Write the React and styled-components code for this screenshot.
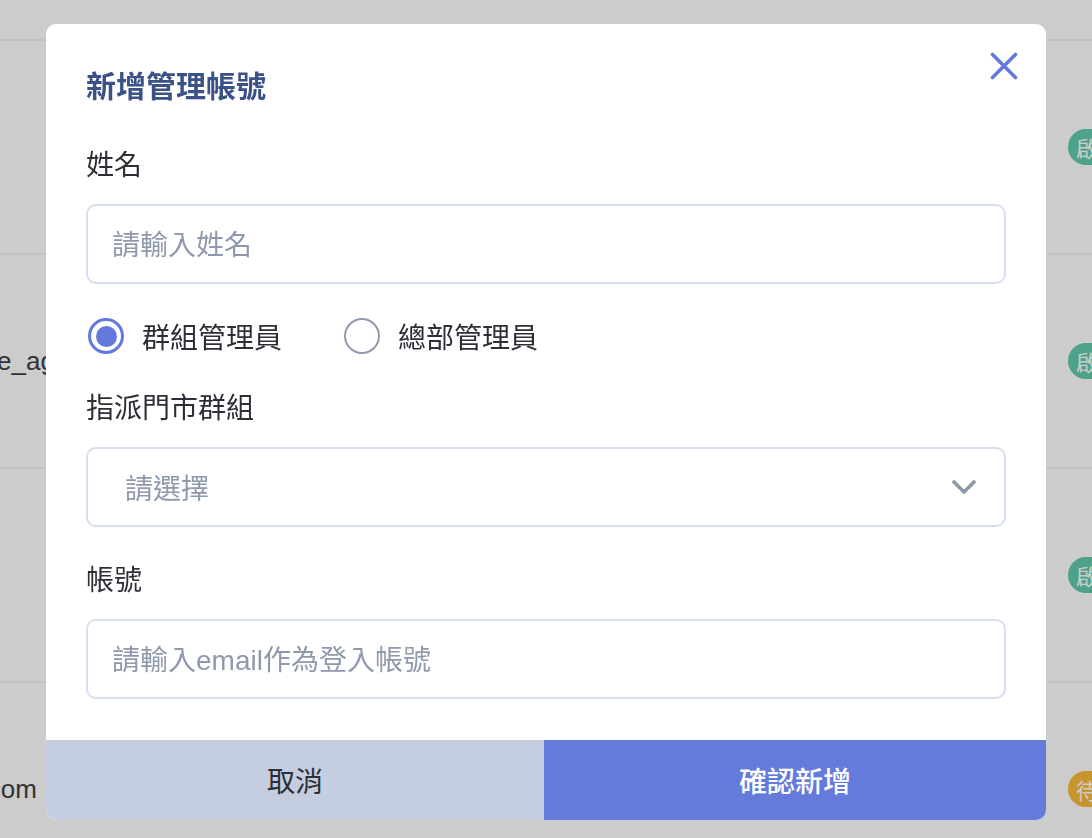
import React, { useState } from 'react';
import styled, { createGlobalStyle } from 'styled-components';

const GlobalStyle = createGlobalStyle`
  html, body {
    margin: 0;
    padding: 0;
    background: #ffffff;
    overflow: hidden;
  }
  * {
    box-sizing: border-box;
  }
`;

const Page = styled.div`
  width: 1092px;
  height: 838px;
  overflow: hidden;
  font-family: "Liberation Sans", "Noto Sans CJK TC", sans-serif;
  color: #404040;
`;

const TableHead = styled.div`
  height: 41px;
  border-bottom: 2px solid #f2f2f6;
`;

const Row = styled.div`
  display: grid;
  grid-template-columns: 1068px 120px;
  align-items: center;
  height: 214px;
  border-bottom: 2px solid #f2f2f6;
`;

const NameCell = styled.div`
  display: flex;
  justify-content: ${p => (p.$alignEnd ? 'flex-end' : 'flex-start')};
  width: ${p => (p.$alignEnd ? '37px' : 'auto')};
  margin-left: ${p => p.$offset || 0}px;
  white-space: nowrap;
  font-size: 26px;
`;

const Badge = styled.span`
  display: inline-flex;
  align-items: center;
  height: 36px;
  padding: 0 18px 0 8px;
  border-radius: 18px;
  background: ${p => p.$color};
  color: #ffffff;
  font-family: "Noto Sans CJK TC", sans-serif;
  font-size: 22px;
  width: max-content;
`;

const Backdrop = styled.div`
  position: fixed;
  inset: 0;
  background: rgba(0, 0, 0, 0.2);
  display: flex;
  justify-content: center;
  align-items: flex-start;
  padding-top: 24px;
`;

const Modal = styled.div`
  position: relative;
  width: 1000px;
  height: 796px;
  background: #ffffff;
  border-radius: 10px;
  overflow: hidden;
  display: flex;
  flex-direction: column;
  font-family: "Noto Sans CJK TC", "Noto Sans", sans-serif;
`;

const CloseButton = styled.button`
  position: absolute;
  top: 28px;
  right: 28px;
  width: 28px;
  height: 28px;
  padding: 0;
  border: none;
  background: none;
  cursor: pointer;
  color: #6479dc;
  display: flex;
`;

const Body = styled.div`
  flex: 1;
  padding: 39px 40px 0;
  display: flex;
  flex-direction: column;
`;

const Title = styled.h2`
  margin: 0 0 38px;
  font-size: 30px;
  line-height: 42px;
  font-weight: 700;
  color: #3b5289;
`;

const Fields = styled.div`
  display: flex;
  flex-direction: column;
  gap: 31px;
`;

const Field = styled.div`
  display: flex;
  flex-direction: column;
  gap: 21px;
`;

const Label = styled.label`
  font-size: 28px;
  line-height: 40px;
  color: #2c2f36;
`;

const Input = styled.input`
  width: 100%;
  height: 80px;
  padding: 4px 24px 0;
  border: 2px solid #d6deef;
  border-radius: 10px;
  font-family: "Liberation Sans", "Noto Sans CJK TC", sans-serif;
  font-size: 28px;
  color: #2c2f36;
  outline: none;
  &::placeholder {
    color: #8f99ad;
  }
`;

const SelectBox = styled.div`
  display: flex;
  align-items: center;
  justify-content: space-between;
  height: 80px;
  padding: 0 28px 0 37px;
  border: 2px solid #d6deef;
  border-radius: 10px;
  font-size: 28px;
  color: #8f99ad;
  cursor: pointer;
`;

const RadioGroup = styled.div`
  display: flex;
  align-items: center;
  gap: 62px;
  height: 40px;
  margin-top: 1px;
  margin-bottom: -1px;
  padding-left: 2px;
`;

const RadioOption = styled.label`
  display: flex;
  align-items: center;
  gap: 18px;
  font-size: 28px;
  line-height: 40px;
  color: #2c2f36;
  cursor: pointer;
`;

const RadioCircle = styled.span`
  width: 36px;
  height: 36px;
  border-radius: 50%;
  border: ${p => (p.$checked ? '3px solid #6479dc' : '2.5px solid #9199ae')};
  display: flex;
  align-items: center;
  justify-content: center;
  &::after {
    content: '';
    width: 21px;
    height: 21px;
    border-radius: 50%;
    background: #6479dc;
    display: ${p => (p.$checked ? 'block' : 'none')};
  }
`;

const Footer = styled.div`
  display: grid;
  grid-template-columns: 498px 502px;
  height: 80px;
`;

const FooterButton = styled.button`
  border: none;
  margin: 0;
  font-family: inherit;
  font-size: 28px;
  font-weight: ${p => (p.$primary ? 500 : 400)};
  background: ${p => (p.$primary ? '#647bdc' : '#c5cde0')};
  color: ${p => (p.$primary ? '#ffffff' : '#2c2f36')};
  cursor: pointer;
`;

const rows = [
  { name: '', offset: 0, badge: '啟用', color: '#62cbac' },
  { name: 'e_agent01', offset: -3, badge: '啟用', color: '#62cbac' },
  { name: '', offset: 0, badge: '啟用', color: '#62cbac' },
  { name: 'manager@example.com', alignEnd: true, badge: '待審', color: '#fbba3a' },
];

const roles = ['群組管理員', '總部管理員'];

export default function App() {
  const [role, setRole] = useState(0);

  return (
    <Page>
      <GlobalStyle />
      <TableHead />
      {rows.map((r, i) => (
        <Row key={i}>
          <NameCell $offset={r.offset} $alignEnd={r.alignEnd}>
            {r.name}
          </NameCell>
          <div>
            <Badge $color={r.color}>{r.badge}</Badge>
          </div>
        </Row>
      ))}

      <Backdrop>
        <Modal>
          <CloseButton aria-label="close">
            <svg width="28" height="28" viewBox="0 0 28 28" fill="none">
              <path d="M2.5 2.5L25.5 25.5M25.5 2.5L2.5 25.5" stroke="currentColor" strokeWidth="3.6" strokeLinecap="round" />
            </svg>
          </CloseButton>
          <Body>
            <Title>新增管理帳號</Title>
            <Fields>
              <Field>
                <Label>姓名</Label>
                <Input placeholder="請輸入姓名" />
              </Field>
              <RadioGroup>
                {roles.map((label, i) => (
                  <RadioOption key={label} onClick={() => setRole(i)}>
                    <RadioCircle $checked={role === i} />
                    {label}
                  </RadioOption>
                ))}
              </RadioGroup>
              <Field>
                <Label>指派門市群組</Label>
                <SelectBox>
                  <span>請選擇</span>
                  <svg width="24" height="14" viewBox="0 0 24 14" fill="none">
                    <path d="M2 2L12 12L22 2" stroke="#8e97aa" strokeWidth="3.6" strokeLinecap="round" strokeLinejoin="round" />
                  </svg>
                </SelectBox>
              </Field>
              <Field>
                <Label>帳號</Label>
                <Input placeholder="請輸入email作為登入帳號" />
              </Field>
            </Fields>
          </Body>
          <Footer>
            <FooterButton>取消</FooterButton>
            <FooterButton $primary>確認新增</FooterButton>
          </Footer>
        </Modal>
      </Backdrop>
    </Page>
  );
}
